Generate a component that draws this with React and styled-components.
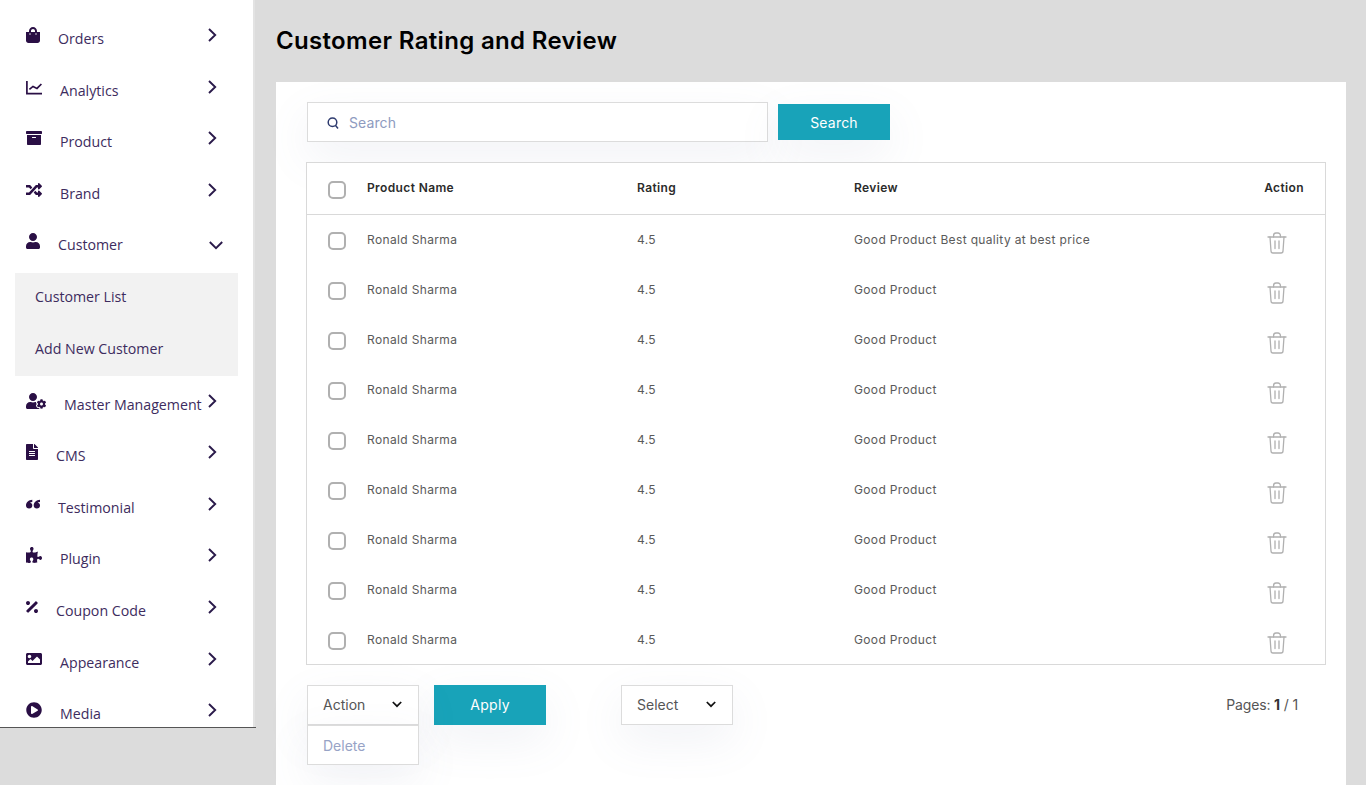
import React from 'react';
import styled, { createGlobalStyle } from 'styled-components';
import {
  FaShoppingBag, FaArchive, FaRandom, FaUser, FaUserCog, FaFileAlt,
  FaPuzzlePiece, FaPercentage, FaImage, FaPlayCircle,
} from 'react-icons/fa';

const Global = createGlobalStyle`
  html, body { margin: 0; padding: 0; height: 100%; overflow: hidden; }
  body { background: #dcdcdc; font-family: "Inter", "Liberation Sans", sans-serif; }
  * { box-sizing: border-box; }
`;

const Page = styled.div`
  display: flex;
  align-items: flex-start;
  height: 785px;
  overflow: hidden;
`;

const Sidebar = styled.div`
  flex: 0 0 256px;
  height: 728px;
  border-bottom: 1px solid #555;
  font-family: "Open Sans", "Noto Sans", sans-serif;
`;

const SidebarInner = styled.nav`
  width: 255px;
  height: 727px;
  padding-top: 15px;
  overflow: hidden;
  background: #fff;
  border-right: 2px solid #e3e3e3;
`;

const NavRow = styled.div`
  display: flex;
  align-items: flex-start;
  height: 51.6px;
  padding-left: 26px;
  color: #2e1a47;
`;

const NavIcon = styled.span`
  display: flex;
  flex: 0 0 auto;
  width: ${p => p.$w}px;
  height: 16px;
  margin-top: 12px;
  margin-right: 18px;
  color: #2a0f45;
  svg { width: ${p => p.$w}px; height: 16px; flex: 0 0 auto; display: block; }
`;

const NavLabel = styled.span`
  flex: 1;
  margin-top: 14px;
  font-size: 14.2px;
  line-height: 20px;
  white-space: nowrap;
  color: #3d2c5e;
`;

const ChevronRight = styled.svg`
  flex: 0 0 auto;
  width: 9px;
  height: 14px;
  margin: 13px 36px 0 0;
`;

const ChevronDown = styled.svg`
  flex: 0 0 auto;
  width: 14px;
  height: 9px;
  margin: 20px 30px 0 0;
`;

const SubMenu = styled.div`
  margin: 0 0 4.6px 15px;
  width: 223px;
  height: 103px;
  background: #f2f2f2;
`;

const SubItem = styled.div`
  height: 52px;
  padding: 13.6px 0 0 20px;
  font-size: 14.2px;
  line-height: 20px;
  color: #3d2c5e;
`;

const Main = styled.main`
  flex: 1;
  min-width: 0;
  padding: 0 20px;
`;

const Title = styled.h1`
  margin: 0;
  height: 82px;
  padding-top: 25px;
  font-size: 24px;
  line-height: 32px;
  font-weight: 600;
  letter-spacing: 0.33px;
  color: #000;
  white-space: nowrap;
`;

const Card = styled.section`
  background: #fff;
  height: 703px;
  padding: 20px 20px 0 30px;
`;

const SearchBar = styled.div`
  display: flex;
  align-items: center;
  gap: 10px;
  margin-left: 1px;
`;

const softShadow = '0 16px 44px rgba(120, 130, 170, 0.1)';

const SearchInput = styled.div`
  display: flex;
  align-items: center;
  gap: 10px;
  width: 461px;
  height: 40px;
  padding: 1px 0 0 19px;
  border: 1px solid #dcdcdc;
  background: #fff;
  box-shadow: ${softShadow};
  font-size: 14px;
  letter-spacing: 0.1px;
  color: #8e9bc0;
`;

const SearchButton = styled.button`
  width: 112px;
  height: 36px;
  border: 0;
  padding: 0;
  background: #18a3b9;
  color: #fff;
  font-family: inherit;
  font-size: 14px;
  letter-spacing: 0.2px;
  box-shadow: ${softShadow};
`;

const ApplyButton = styled(SearchButton)`
  height: 40px;
  padding-bottom: 2px;
  letter-spacing: 0.3px;
`;

const Table = styled.div`
  position: relative;
  margin-top: 20px;
  width: 1020px;
  height: 503px;
  border: 1px solid #d9d9d9;
  background: #fff;
`;

const Row = styled.div`
  display: grid;
  grid-template-columns: 60px 270px 217px 1fr 60px;
  align-items: center;
  height: 50px;
`;

const HeadRow = styled(Row)`
  height: 52px;
  border-bottom: 1px solid #d9d9d9;
`;

const Check = styled.span`
  display: block;
  width: 18px;
  height: 18px;
  margin: 2px 0 0 21px;
  border: 2px solid #b0b0b0;
  border-radius: 5px;
  background: #fff;
`;

const Cell = styled.span`
  margin-bottom: 2px;
  font-size: 12px;
  letter-spacing: 0.35px;
  color: #5a5a5a;
  white-space: nowrap;
`;

const HeadCell = styled(Cell)`
  font-weight: 600;
  letter-spacing: 0.38px;
  color: #2b2b2b;
`;

const HeadAction = styled(HeadCell)`
  justify-self: end;
  margin-right: 21px;
`;

const Trash = styled.svg`
  justify-self: end;
  width: 20px;
  height: 22px;
  margin: 6px 38px 0 0;
`;

const Footer = styled.div`
  display: flex;
  align-items: flex-start;
  margin: 20px 0 0 1px;
`;

const SelectWrap = styled.div`
  position: relative;
  margin: 0 ${p => p.$mr ?? 0}px 0 ${p => p.$ml ?? 0}px;
`;

const SelectBox = styled.div`
  display: flex;
  align-items: center;
  justify-content: space-between;
  width: 112px;
  height: 40px;
  padding: 0 16px 1px 15px;
  border: 1px solid #dcdcdc;
  background: #fff;
  font-size: 14px;
  color: #555;
  box-shadow: ${softShadow};
`;

const Menu = styled.div`
  position: absolute;
  top: 40px;
  left: 0;
  width: 112px;
  height: 40px;
  padding: 0 15px;
  display: flex;
  align-items: center;
  border: 1px solid #dcdcdc;
  background: #fff;
  font-size: 14px;
  color: #97a3c6;
  box-shadow: ${softShadow};
`;

const Pages = styled.div`
  margin-left: auto;
  margin-right: 28px;
  height: 40px;
  line-height: 40px;
  font-size: 14px;
  letter-spacing: -0.15px;
  color: #555;
  b { font-weight: 700; color: #333; }
`;

const Right = () => (
  <ChevronRight viewBox="0 0 9 14" fill="none" stroke="#2a1a4a" strokeWidth="1.9">
    <path d="M1 1l6.2 6L1 13" />
  </ChevronRight>
);
const Down = () => (
  <ChevronDown viewBox="0 0 14 9" fill="none" stroke="#2a1a4a" strokeWidth="1.9">
    <path d="M.8 1 7 7.2 13.2 1" />
  </ChevronDown>
);
const Caret = () => (
  <svg width="10" height="7" viewBox="0 0 10 7" fill="none" stroke="#111" strokeWidth="1.7">
    <path d="M.8 1 5 5.2 9.2 1" />
  </svg>
);
const TrashIcon = () => (
  <Trash viewBox="0 0 20 22" fill="none" stroke="#b0b0b0" strokeWidth="1.3" strokeLinecap="round" strokeLinejoin="round">
    <path d="M1 5h18" />
    <path d="M6.6 5V3.4A2.4 2.4 0 0 1 9 1h2a2.4 2.4 0 0 1 2.4 2.4V5" />
    <path d="M3 5l1 14a2 2 0 0 0 2 2h8a2 2 0 0 0 2-2l1-14" />
    <path d="M8 9v7.5M12 9v7.5" />
  </Trash>
);

const ChartIcon = () => (
  <svg viewBox="0 0 16 16" fill="none" stroke="currentColor" strokeWidth="1.7">
    <path d="M.9 2v12.6H16" />
    <path d="M3.4 10.4 7 7.4l4 2 4.4-4.4" />
  </svg>
);

const QuoteIcon = () => (
  <svg viewBox="0 0 14 16" fill="currentColor">
    <path d="M6.3 3.8C2.8 4 0 6.4 0 9.4 0 11.2 1.3 12.4 3.1 12.4c1.9 0 3.2-1.3 3.2-3 0-1.6-1-2.6-2.3-2.7.4-.5 1.2-.8 2.3-.8z" />
    <path d="M14 3.8c-3.5.2-6.3 2.6-6.3 5.6 0 1.8 1.3 3 3.1 3 1.9 0 3.2-1.3 3.2-3 0-1.6-1-2.6-2.3-2.7.4-.5 1.2-.8 2.3-.8z" />
  </svg>
);

const PuzzleIcon = () => <FaPuzzlePiece preserveAspectRatio="none" />;

const before = [
  ['Orders', FaShoppingBag, 14],
  ['Analytics', ChartIcon, 16],
  ['Product', FaArchive, 16],
  ['Brand', FaRandom, 16],
];
const after = [
  ['Master Management', FaUserCog, 20],
  ['CMS', FaFileAlt, 12],
  ['Testimonial', QuoteIcon, 14],
  ['Plugin', PuzzleIcon, 16],
  ['Coupon Code', FaPercentage, 12],
  ['Appearance', FaImage, 16],
  ['Media', FaPlayCircle, 16],
];

const reviews = ['Good Product Best quality at best price', ...Array(8).fill('Good Product')];

const NavItem = ({ label, Icon, w }) => (
  <NavRow>
    <NavIcon $w={w}><Icon /></NavIcon>
    <NavLabel>{label}</NavLabel>
    <Right />
  </NavRow>
);

export default function App() {
  return (
    <Page>
      <Global />
      <Sidebar>
        <SidebarInner>
          {before.map(([l, I, w]) => <NavItem key={l} label={l} Icon={I} w={w} />)}
          <NavRow>
            <NavIcon $w={14}><FaUser /></NavIcon>
            <NavLabel>Customer</NavLabel>
            <Down />
          </NavRow>
          <SubMenu>
            <SubItem>Customer List</SubItem>
            <SubItem>Add New Customer</SubItem>
          </SubMenu>
          {after.map(([l, I, w]) => <NavItem key={l} label={l} Icon={I} w={w} />)}
        </SidebarInner>
      </Sidebar>
      <Main>
        <Title>Customer Rating and Review</Title>
        <Card>
          <SearchBar>
            <SearchInput>
              <svg width="12" height="12" viewBox="0 0 12 12" fill="none" stroke="#2d3a6e" strokeWidth="1.5">
                <circle cx="5.5" cy="5.2" r="4.3" /><path d="M8.6 8.6l2.4 2.8" />
              </svg>
              Search
            </SearchInput>
            <SearchButton>Search</SearchButton>
          </SearchBar>
          <Table>
            <HeadRow>
              <Check />
              <HeadCell>Product Name</HeadCell>
              <HeadCell>Rating</HeadCell>
              <HeadCell>Review</HeadCell>
              <HeadAction>Action</HeadAction>
            </HeadRow>
            {reviews.map((r, i) => (
              <Row key={i}>
                <Check />
                <Cell>Ronald Sharma</Cell>
                <Cell>4.5</Cell>
                <Cell>{r}</Cell>
                <TrashIcon />
              </Row>
            ))}
          </Table>
          <Footer>
            <SelectWrap $mr={15}>
              <SelectBox>Action <Caret /></SelectBox>
              <Menu>Delete</Menu>
            </SelectWrap>
            <ApplyButton>Apply</ApplyButton>
            <SelectWrap $ml={75}>
              <SelectBox>Select <Caret /></SelectBox>
            </SelectWrap>
            <Pages>Pages: <b>1</b> / 1</Pages>
          </Footer>
        </Card>
      </Main>
    </Page>
  );
}
